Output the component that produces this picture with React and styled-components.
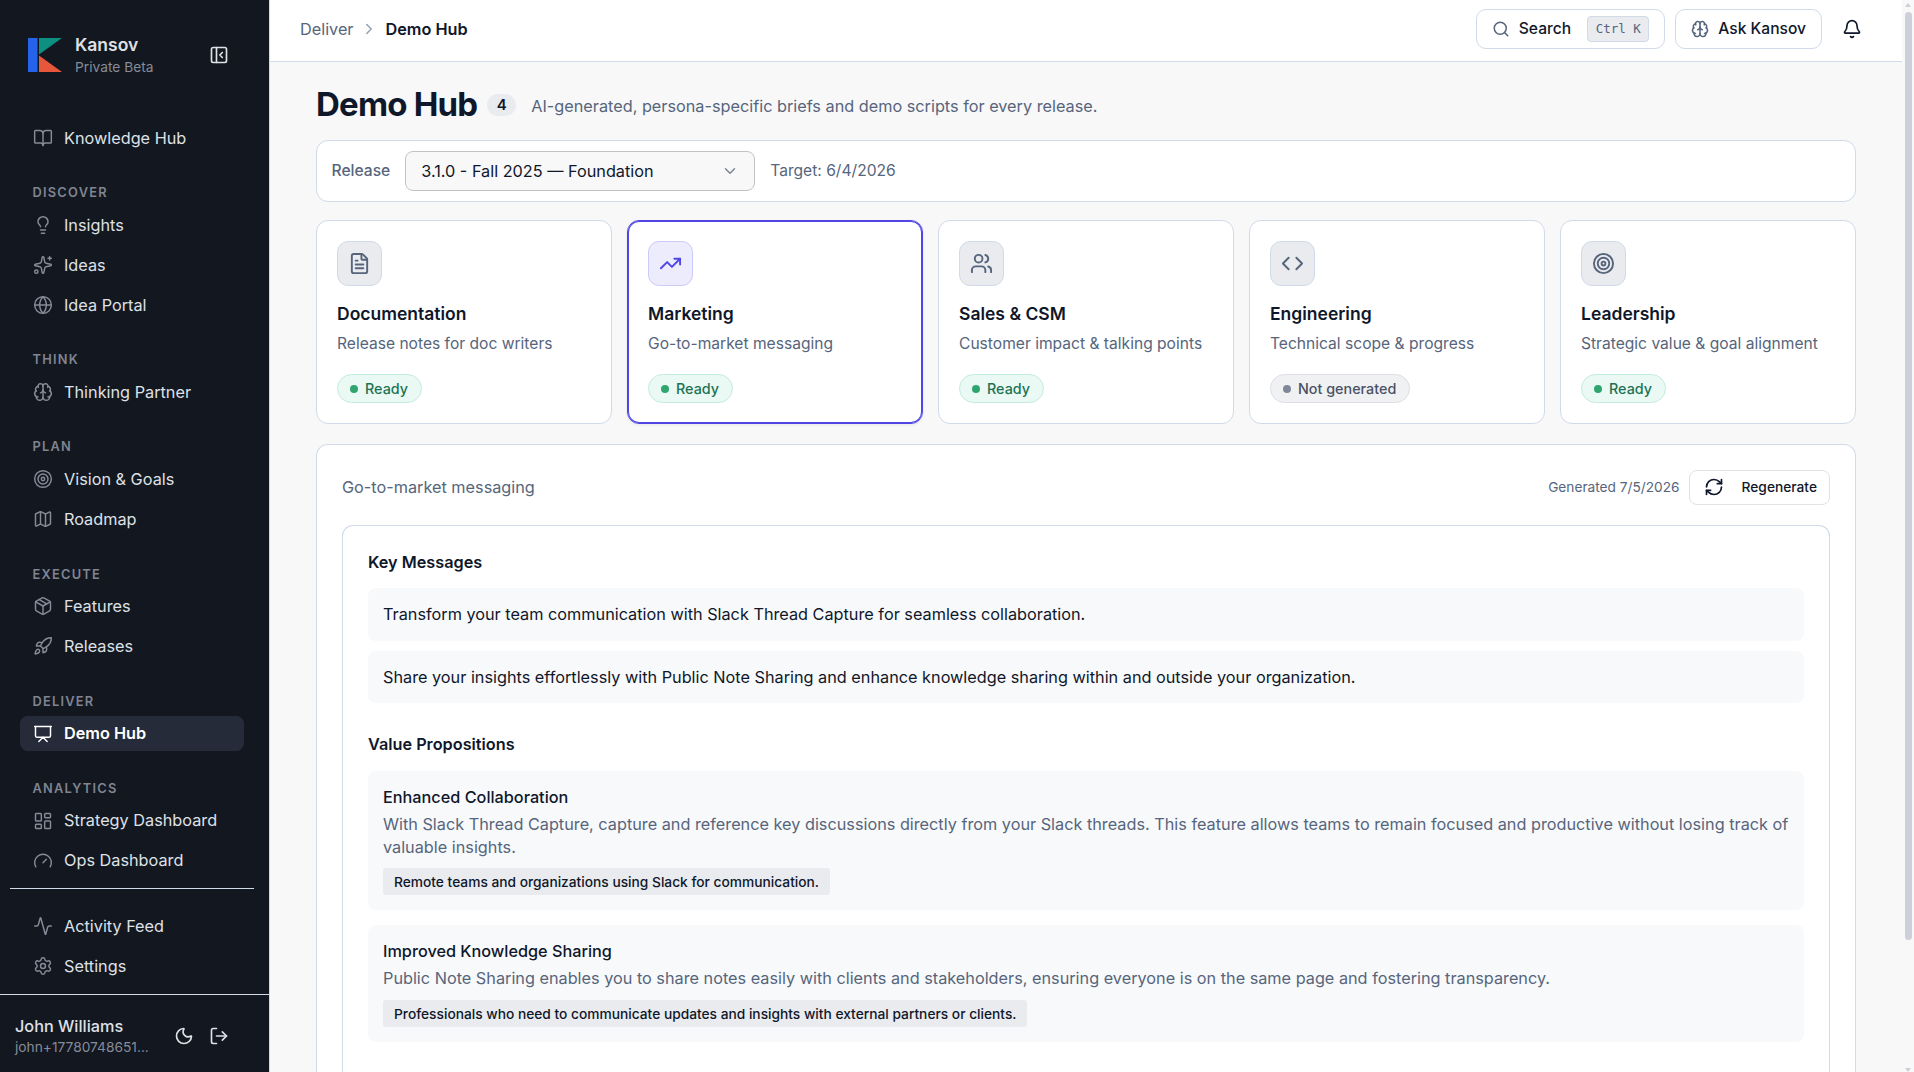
import React from "react";
import styled, { createGlobalStyle } from "styled-components";
import {
  BookOpen, Lightbulb, Sparkles, Globe, Brain, Target, Map, Package, Rocket,
  Presentation, LayoutDashboard, Gauge, Activity, Settings, Moon, LogOut,
  PanelLeftClose, ChevronRight, ChevronDown, Search, Bell, FileText,
  TrendingUp, Users, Code, RefreshCw,
} from "lucide-react";

const c = {
  ink: "#0f172a",
  slate: "#56657c",
  line: "#d0dae8",
  side: "#131720",
  sideText: "#dfe1e7",
  sideMuted: "#868b97",
  accent: "#4f46e5",
};

const Global = createGlobalStyle`
  *, *::before, *::after { box-sizing: border-box; }
  body { margin: 0; background: #f8f8f8; overflow: hidden; }
  body, button { font-family: Inter, "Liberation Sans", sans-serif; }
  h1, h2, h3, p { margin: 0; }
  svg { flex-shrink: 0; display: block; }
`;

const Shell = styled.div`
  display: flex;
  width: 100%;
  height: 1072px;
  overflow: hidden;
  color: ${c.ink};
  font-size: 16.25px;
  line-height: 22.5px;
`;

const Sidebar = styled.aside`
  width: 270px;
  flex-shrink: 0;
  display: flex;
  flex-direction: column;
  background: ${c.side};
  border-right: 1px solid ${c.line};
  color: ${c.sideText};
`;

const Brand = styled.div`
  display: flex;
  align-items: center;
  flex-shrink: 0;
  height: 110px;
  padding: 0 40px 0 28px;
`;

const BrandText = styled.div`
  flex: 1;
  margin-left: 13px;
`;

const BrandName = styled.div`
  font-size: 17.5px;
  font-weight: 600;
  line-height: 23px;
`;

const BrandTag = styled.div`
  font-size: 13.75px;
  line-height: 22px;
  color: ${c.sideMuted};
`;

const Nav = styled.nav`
  display: flex;
  flex-direction: column;
  flex-shrink: 0;
  gap: 5px;
  padding: 10.6px 25px 9.8px 20px;
`;

const NavLabel = styled.div`
  height: 42.1px;
  padding: 23.7px 0 0 12.5px;
  font-size: 12.8px;
  line-height: 18px;
  font-weight: 600;
  letter-spacing: 1.25px;
  color: #7f8591;
`;

const NavItem = styled.div`
  display: flex;
  align-items: center;
  gap: 11px;
  height: 35px;
  padding-left: 13px;
  border-radius: 7.5px;
  background: ${(p) => (p.$active ? "#252b38" : "transparent")};
  color: ${(p) => (p.$active ? "#ffffff" : c.sideText)};
  font-weight: ${(p) => (p.$active ? 600 : 400)};
  svg { color: ${(p) => (p.$active ? "#ffffff" : c.sideMuted)}; }
`;

const NavFoot = styled.div`
  display: flex;
  flex-direction: column;
  gap: 5px;
  margin: 0 15px 0 10px;
  padding: 20px 10px 10px;
  border-top: 1px solid ${c.line};
`;

const Account = styled.div`
  display: flex;
  align-items: center;
  justify-content: space-between;
  margin-top: auto;
  height: 78px;
  padding: 6px 40px 0 15px;
  border-top: 1px solid ${c.line};
`;

const AccountText = styled.div`
  white-space: nowrap;
`;

const AccountName = styled.div`
  font-weight: 500;
  line-height: 21px;
`;

const AccountMail = styled.div`
  font-size: 13.75px;
  line-height: 20px;
  color: ${c.sideMuted};
`;

const AccountIcons = styled.div`
  display: flex;
  gap: 15px;
  padding-bottom: 2px;
`;

const Page = styled.div`
  flex: 1;
  min-width: 0;
  display: flex;
  flex-direction: column;
`;

const TopBar = styled.header`
  display: flex;
  align-items: center;
  justify-content: space-between;
  flex-shrink: 0;
  height: 62px;
  padding: 0 40px 3px 30px;
  background: #ffffff;
  border-bottom: 1px solid ${c.line};
`;

const Crumbs = styled.div`
  display: flex;
  align-items: center;
  gap: 7px;
  color: ${c.slate};
  svg { color: #94a0b3; }
`;

const CrumbHere = styled.span`
  font-weight: 600;
  color: ${c.ink};
`;

const TopActions = styled.div`
  display: flex;
  align-items: center;
  gap: 10px;
`;

const TopButton = styled.button`
  display: flex;
  align-items: center;
  gap: 9px;
  height: 40px;
  padding: 0 15px 1px;
  border: 1px solid ${c.line};
  border-radius: 10px;
  background: #ffffff;
  color: ${c.ink};
  font-size: 15.6px;
  font-weight: 500;
  svg { color: ${c.slate}; }
`;

const Kbd = styled.kbd`
  display: flex;
  align-items: center;
  height: 26px;
  margin-left: 7px;
  padding: 0 7.5px;
  border: 1px solid ${c.line};
  border-radius: 4px;
  background: #e9ebef;
  color: ${c.slate};
  font: 400 12.5px "DejaVu Sans Mono", monospace;
`;

const BellSlot = styled.div`
  padding-left: 10px;
`;

const Main = styled.main`
  flex: 1;
  min-height: 0;
  display: flex;
  flex-direction: column;
  padding: 20px 46px 0;
`;

const Heading = styled.div`
  display: flex;
  align-items: center;
  height: 46px;
  margin-bottom: 12px;
`;

const Title = styled.h1`
  margin-bottom: 2px;
  font-size: 33px;
  line-height: 40px;
  font-weight: 700;
  letter-spacing: -0.8px;
`;

const Count = styled.span`
  display: flex;
  align-items: center;
  justify-content: center;
  width: 29px;
  height: 22px;
  margin-left: 10px;
  border-radius: 11px;
  background: #e9ebef;
  font-size: 15px;
  font-weight: 600;
`;

const Tagline = styled.p`
  margin-left: 15px;
  padding-top: 3px;
  color: ${c.slate};
`;

const ReleaseBar = styled.section`
  display: flex;
  align-items: center;
  flex-shrink: 0;
  gap: 15px;
  height: 62px;
  padding: 0 14.5px;
  border: 1px solid ${c.line};
  border-radius: 12px;
  background: #ffffff;
  color: ${c.slate};
  font-size: 15.6px;
`;

const FieldLabel = styled.span`
  padding-top: 1px;
  font-weight: 500;
`;

const FieldNote = styled.span`
  padding-top: 1px;
`;

const Select = styled.div`
  display: flex;
  align-items: center;
  justify-content: space-between;
  width: 350px;
  height: 40px;
  padding: 0 15px;
  border: 1px solid #c2c3c6;
  border-radius: 8px;
  background: #f8f8f8;
  color: ${c.ink};
  font-size: 16.25px;
  svg { color: #7c8593; }
`;

const Cards = styled.section`
  display: grid;
  grid-template-columns: repeat(5, 1fr);
  gap: 15px;
  margin: 18px 0 20px;
`;

const Card = styled.article`
  height: 204px;
  padding: 20px;
  border: 1px solid ${(p) => (p.$active ? c.accent : c.line)};
  border-radius: 12px;
  background: #ffffff;
  box-shadow: ${(p) => (p.$active ? `inset 0 0 0 1px ${c.accent}, 0 1px 3px rgba(15,23,42,.08)` : "none")};
`;

const IconTile = styled.div`
  display: grid;
  place-items: center;
  width: 45px;
  height: 45px;
  border: 1px solid ${(p) => (p.$active ? "#cdc9f8" : c.line)};
  border-radius: 11px;
  background: ${(p) => (p.$active ? "#edecfc" : "#e9ebef")};
  color: ${(p) => (p.$active ? c.accent : c.slate)};
`;

const CardTitle = styled.h3`
  margin-top: 16px;
  font-size: 17.5px;
  line-height: 24px;
  font-weight: 600;
`;

const CardText = styled.p`
  margin-top: 7px;
  font-size: 15.6px;
  line-height: 22px;
  color: ${c.slate};
`;

const Pill = styled.span`
  display: inline-flex;
  align-items: center;
  gap: 7px;
  height: 29px;
  margin-top: 19px;
  padding: 1px 13px 0 12px;
  border: 1px solid ${(p) => (p.$ready ? "#c3ecdb" : "#dddfe4")};
  border-radius: 15px;
  background: ${(p) => (p.$ready ? "#ebf9f4" : "#f0f1f3")};
  color: ${(p) => (p.$ready ? "#1d7353" : "#4a5162")};
  font-size: 14.35px;
  font-weight: 500;
`;

const Dot = styled.i`
  width: 8px;
  height: 8px;
  border-radius: 50%;
  background: ${(p) => (p.$ready ? "#2fa56f" : "#81879a")};
`;

const Panel = styled.section`
  flex: 1;
  display: flex;
  flex-direction: column;
  padding: 25px 25px 0;
  border: 1px solid ${c.line};
  border-bottom: 0;
  border-radius: 12px 12px 0 0;
  background: #ffffff;
`;

const PanelHead = styled.div`
  display: flex;
  align-items: center;
  gap: 9.5px;
  height: 35px;
  margin-bottom: 20px;
  color: ${c.slate};
`;

const PanelTitle = styled.span`
  flex: 1;
`;

const Stamp = styled.span`
  font-size: 13.7px;
`;

const Regenerate = styled.button`
  display: flex;
  align-items: center;
  gap: 17.5px;
  height: 35px;
  padding: 0 12px 1px 14px;
  border: 1px solid #e0e2e6;
  border-radius: 8px;
  background: #ffffff;
  color: ${c.ink};
  font-size: 13.75px;
  font-weight: 500;
`;

const Brief = styled.div`
  flex: 1;
  padding: 24.5px 25px 0;
  border: 1px solid ${c.line};
  border-bottom: 0;
  border-radius: 11px 11px 0 0;
`;

const SectionTitle = styled.h2`
  margin: ${(p) => (p.$later ? "29.5px 0 16px" : "0 0 15px")};
  font-size: 16.25px;
  line-height: 22.5px;
  font-weight: 600;
`;

const Stack = styled.div`
  display: flex;
  flex-direction: column;
  gap: ${(p) => p.$gap}px;
`;

const Note = styled.div`
  padding: 15px;
  border-radius: 8px;
  background: #f8f9fb;
`;

const NoteTitle = styled.h3`
  font-size: 16.25px;
  line-height: 22.5px;
  font-weight: 500;
`;

const NoteText = styled.p`
  margin: 4.7px 0 10px;
  color: ${c.slate};
`;

const Audience = styled.span`
  display: flex;
  align-items: center;
  width: fit-content;
  height: 27px;
  padding: 1.5px 11px 0;
  border-radius: 3px;
  background: #e9ebef;
  font-size: 13.75px;
  font-weight: 500;
`;

const Scroller = styled.div`
  display: flex;
  flex-direction: column;
  align-items: center;
  width: 12px;
  flex-shrink: 0;
  padding: 3px 0 0;
  background: #f8f8f8;
`;

const Arrow = styled.i`
  width: 0;
  height: 0;
  margin-top: ${(p) => (p.$down ? "auto" : 0)};
  border: 3px solid transparent;
  border-top: ${(p) => (p.$down ? "4px solid #cdd0d8" : 0)};
  border-bottom: ${(p) => (p.$down ? 0 : "4px solid #cdd0d8")};
`;

const Thumb = styled.div`
  width: 7px;
  height: 928px;
  margin-top: 5px;
  border-radius: 4px;
  background: #cdd0d8;
`;

const nav = [
  { items: [["Knowledge Hub", BookOpen]] },
  { label: "DISCOVER", items: [["Insights", Lightbulb], ["Ideas", Sparkles], ["Idea Portal", Globe]] },
  { label: "THINK", items: [["Thinking Partner", Brain]] },
  { label: "PLAN", items: [["Vision & Goals", Target], ["Roadmap", Map]] },
  { label: "EXECUTE", items: [["Features", Package], ["Releases", Rocket]] },
  { label: "DELIVER", items: [["Demo Hub", Presentation]] },
  { label: "ANALYTICS", items: [["Strategy Dashboard", LayoutDashboard], ["Ops Dashboard", Gauge]] },
];

const personas = [
  { title: "Documentation", text: "Release notes for doc writers", icon: FileText, ready: true },
  { title: "Marketing", text: "Go-to-market messaging", icon: TrendingUp, ready: true, active: true },
  { title: "Sales & CSM", text: "Customer impact & talking points", icon: Users, ready: true },
  { title: "Engineering", text: "Technical scope & progress", icon: Code, ready: false },
  { title: "Leadership", text: "Strategic value & goal alignment", icon: Target, ready: true },
];

const messages = [
  "Transform your team communication with Slack Thread Capture for seamless collaboration.",
  "Share your insights effortlessly with Public Note Sharing and enhance knowledge sharing within and outside your organization.",
];

const values = [
  {
    title: "Enhanced Collaboration",
    text: "With Slack Thread Capture, capture and reference key discussions directly from your Slack threads. This feature allows teams to remain focused and productive without losing track of valuable insights.",
    audience: "Remote teams and organizations using Slack for communication.",
  },
  {
    title: "Improved Knowledge Sharing",
    text: "Public Note Sharing enables you to share notes easily with clients and stakeholders, ensuring everyone is on the same page and fostering transparency.",
    audience: "Professionals who need to communicate updates and insights with external partners or clients.",
  },
];

const Logo = () => (
  <svg width="34" height="34" viewBox="0 0 34 34">
    <rect width="9.5" height="34" fill="#2563eb" />
    <path d="M11 0H34L11 16.5Z" fill="#0d9080" />
    <path d="M11 17.5L34 34H11Z" fill="#e8573c" />
  </svg>
);

const NavLink = ({ label, icon: Icon }) => (
  <NavItem $active={label === "Demo Hub"}>
    <Icon size={20} strokeWidth={1.75} />
    {label}
  </NavItem>
);

export default function App() {
  return (
    <Shell>
      <Global />
      <Sidebar>
        <Brand>
          <Logo />
          <BrandText>
            <BrandName>Kansov</BrandName>
            <BrandTag>Private Beta</BrandTag>
          </BrandText>
          <PanelLeftClose size={20} />
        </Brand>
        <Nav>
          {nav.map((g) => (
            <React.Fragment key={g.label || "top"}>
              {g.label && <NavLabel>{g.label}</NavLabel>}
              {g.items.map(([label, icon]) => <NavLink key={label} label={label} icon={icon} />)}
            </React.Fragment>
          ))}
        </Nav>
        <NavFoot>
          <NavLink label="Activity Feed" icon={Activity} />
          <NavLink label="Settings" icon={Settings} />
        </NavFoot>
        <Account>
          <AccountText>
            <AccountName>John Williams</AccountName>
            <AccountMail>john+17780748651...</AccountMail>
          </AccountText>
          <AccountIcons>
            <Moon size={20} />
            <LogOut size={20} />
          </AccountIcons>
        </Account>
      </Sidebar>
      <Page>
        <TopBar>
          <Crumbs>
            Deliver
            <ChevronRight size={18} />
            <CrumbHere>Demo Hub</CrumbHere>
          </Crumbs>
          <TopActions>
            <TopButton>
              <Search size={18} />
              Search
              <Kbd>Ctrl K</Kbd>
            </TopButton>
            <TopButton>
              <Brain size={18} />
              Ask Kansov
            </TopButton>
            <BellSlot><Bell size={20} /></BellSlot>
          </TopActions>
        </TopBar>
        <Main>
          <Heading>
            <Title>Demo Hub</Title>
            <Count>4</Count>
            <Tagline>AI-generated, persona-specific briefs and demo scripts for every release.</Tagline>
          </Heading>
          <ReleaseBar>
            <FieldLabel>Release</FieldLabel>
            <Select>
              3.1.0 - Fall 2025 — Foundation
              <ChevronDown size={18} />
            </Select>
            <FieldNote>Target: 6/4/2026</FieldNote>
          </ReleaseBar>
          <Cards>
            {personas.map(({ title, text, icon: Icon, ready, active }) => (
              <Card key={title} $active={active}>
                <IconTile $active={active}><Icon size={23} /></IconTile>
                <CardTitle>{title}</CardTitle>
                <CardText>{text}</CardText>
                <Pill $ready={ready}>
                  <Dot $ready={ready} />
                  {ready ? "Ready" : "Not generated"}
                </Pill>
              </Card>
            ))}
          </Cards>
          <Panel>
            <PanelHead>
              <PanelTitle>Go-to-market messaging</PanelTitle>
              <Stamp>Generated 7/5/2026</Stamp>
              <Regenerate>
                <RefreshCw size={20} />
                Regenerate
              </Regenerate>
            </PanelHead>
            <Brief>
              <SectionTitle>Key Messages</SectionTitle>
              <Stack $gap={10}>
                {messages.map((m) => <Note key={m}>{m}</Note>)}
              </Stack>
              <SectionTitle $later>Value Propositions</SectionTitle>
              <Stack $gap={15}>
                {values.map((v) => (
                  <Note key={v.title}>
                    <NoteTitle>{v.title}</NoteTitle>
                    <NoteText>{v.text}</NoteText>
                    <Audience>{v.audience}</Audience>
                  </Note>
                ))}
              </Stack>
            </Brief>
          </Panel>
        </Main>
      </Page>
      <Scroller>
        <Arrow />
        <Thumb />
        <Arrow $down />
      </Scroller>
    </Shell>
  );
}
